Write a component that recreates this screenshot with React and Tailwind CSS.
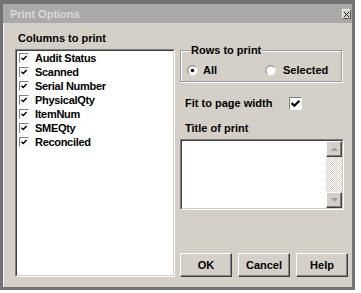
import React from "react";

const font = "font-['Liberation_Sans',Arial,sans-serif]";

// Small tick used in the list and the fit checkbox
const Tick = ({ size = 9 }) => (
  <svg width={size - 2} height={size - 2} viewBox="0 0 7 7">
    <path d="M0.5 3.2 L2.6 5.3 L6.5 1.3" stroke="#000" strokeWidth="1.7" fill="none" />
  </svg>
);

const Check = ({ size = 9 }) => (
  <span
    className="flex items-center justify-center bg-white border border-t-[#808080] border-l-[#808080] border-r-[#f4f4f4] border-b-[#f4f4f4] shrink-0"
    style={{ width: size, height: size }}
  >
    <Tick size={size - 2} />
  </span>
);

const Radio = ({ on }) => (
  <svg width="11" height="11" viewBox="0 0 12 12" className="shrink-0">
    <circle cx="6" cy="6" r="5.5" fill="#fff" />
    <path d="M2.1 9.9 A5.5 5.5 0 0 1 9.9 2.1" stroke="#8a8a8a" fill="none" />
    <path d="M2.8 9.2 A4.5 4.5 0 0 1 9.2 2.8" stroke="#b0b0b0" fill="none" />
    {on && <circle cx="6" cy="6" r="1.8" fill="#000" />}
  </svg>
);

const Btn = ({ children }) => (
  <button className="w-[52px] h-[24px] flex items-center justify-center bg-[#d4d0c8] border border-t-white border-l-white border-r-[#404040] border-b-[#404040] shadow-[inset_-1px_-1px_0_#808080] text-[11px] font-bold text-black">
    {children}
  </button>
);

const ArrowBtn = ({ up }) => (
  <div className="h-[16px] flex items-center justify-center bg-[#d4d0c8] border border-t-white border-l-white border-r-[#404040] border-b-[#404040] shadow-[inset_-1px_-1px_0_#808080]">
    <svg width="7" height="4" viewBox="0 0 7 4">
      <path d={up ? "M3.5 0 L7 4 L0 4 Z" : "M0 0 L7 0 L3.5 4 Z"} fill="#a0a0a0" />
    </svg>
  </div>
);

const columns = [
  "Audit Status",
  "Scanned",
  "Serial Number",
  "PhysicalQty",
  "ItemNum",
  "SMEQty",
  "Reconciled",
];

export default function App() {
  return (
    <div className={`w-[361px] h-[293px] bg-white ${font} text-black text-[11px] leading-[13px]`}>
      <div className="w-[355px] h-[290px] flex flex-col border-x-[3px] border-b-[3px] border-t-[4px] border-[#737373] bg-[#d4d0c8]">
        {/* Title bar */}
        <div className="h-[19px] flex items-center justify-between bg-[#a9a9a9] pl-[7px] pr-[1px]">
          <span className="font-bold text-[#dadada] text-[11px] mt-[1px]">Print Options</span>
          <span className="w-[9px] h-[10px] mt-[1px] flex items-center justify-center bg-[#d4d0c8] border border-t-white border-l-white border-r-[#555] border-b-[#555]">
            <svg width="5" height="5" viewBox="0 0 5 5">
              <path d="M0 0 L5 5 M5 0 L0 5" stroke="#222" strokeWidth="1" />
            </svg>
          </span>
        </div>

        {/* Body */}
        <div className="flex-1 flex gap-[5px] pl-[11px] pt-[9px] border-l border-[#f2f2f2]">
          {/* Columns */}
          <div className="w-[160px] flex flex-col">
            <div className="h-[13px] pl-[3px] font-bold">Columns to print</div>
            <div className="mt-[4px] h-[228px] border border-t-[#808080] border-l-[#808080] border-r-white border-b-white">
              <div className="h-full bg-white border border-t-[#404040] border-l-[#404040] border-r-[#d4d0c8] border-b-[#d4d0c8] pl-[2px]">
                {columns.map((c) => (
                  <div key={c} className="h-[14px] flex items-center gap-[6px]">
                    <Check size={10} />
                    <span className="font-bold tracking-[-0.3px]">{c}</span>
                  </div>
                ))}
              </div>
            </div>
          </div>

          {/* Options */}
          <div className="w-[169px] flex flex-col">
            <div className="relative mt-[18px] w-[162px] h-[32px] border border-[#9a9a9a] shadow-[inset_1px_1px_0_#fff,1px_1px_0_#fff] flex items-center pt-[8px] pl-[6px]">
              <span className="absolute left-[9px] -top-[7px] px-[1px] bg-[#d4d0c8] font-bold">
                Rows to print
              </span>
              <div className="w-[78px] flex items-center gap-[5px]">
                <Radio on />
                <span className="font-bold">All</span>
              </div>
              <div className="flex items-center gap-[7px]">
                <Radio />
                <span className="font-bold">Selected</span>
              </div>
            </div>

            <div className="mt-[15px] h-[13px] flex items-center">
              <span className="w-[109px] pl-[5px] font-bold">Fit to page width</span>
              <Check size={13} />
            </div>

            <div className="mt-[12px] h-[13px] pl-[5px] font-bold">Title of print</div>

            <div className="mt-[4px] w-[164px] h-[71px] border border-t-[#808080] border-l-[#808080] border-r-white border-b-white">
              <div className="h-full flex border border-t-[#404040] border-l-[#404040] border-r-[#d4d0c8] border-b-[#d4d0c8]">
                <div className="flex-1 bg-white" />
                <div className="w-[16px] flex flex-col">
                  <ArrowBtn up />
                  <div className="flex-1 bg-[repeating-conic-gradient(#d4d0c8_0%_25%,#ffffff_0%_50%)] bg-[length:2px_2px]" />
                  <ArrowBtn />
                </div>
              </div>
            </div>

            <div className="mt-[43px] flex gap-[6px]">
              <Btn>OK</Btn>
              <Btn>Cancel</Btn>
              <Btn>Help</Btn>
            </div>
          </div>
        </div>
      </div>
    </div>
  );
}
